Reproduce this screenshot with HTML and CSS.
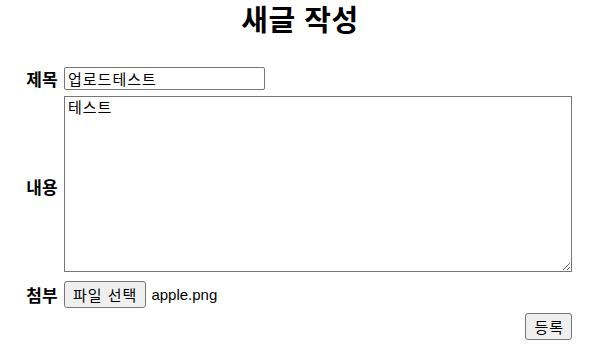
FILE: index.html
```html
<!DOCTYPE html>
<html>
<head>
    <meta charset="utf-8">
    <title>새글 작성</title>
    <link rel="stylesheet" href="styles.css">
</head>
<body>
    <h1 class="title">새글 작성</h1>
    <form class="write-form" id="writeForm">
        <label class="label" for="subject">제목</label>
        <div class="field">
            <input class="input" type="text" id="subject" value="업로드테스트">
        </div>

        <label class="label" for="content">내용</label>
        <div class="field field-content">
            <textarea class="textarea" id="content">테스트</textarea>
        </div>

        <span class="label">첨부</span>
        <div class="field file-field">
            <button class="btn" type="button">파일 선택</button>
            <span class="file-name">apple.png</span>
        </div>

        <div class="actions">
            <button class="btn btn-submit" type="submit">등록</button>
        </div>
    </form>
</body>
</html>
```

FILE: styles.css
```css
body {
    margin: 0;
    font-family: "Liberation Sans", "Noto Sans CJK KR", sans-serif;
    color: #000;
    background: #fff;
}
.title {
    margin: 1px 0 0;
    font-size: 29px;
    line-height: 40px;
    font-weight: bold;
    letter-spacing: 0.5px;
    text-align: center;
}
.write-form {
    display: grid;
    grid-template-columns: 40px 508px;
    column-gap: 2px;
    row-gap: 5px;
    margin: 25px 0 0 22px;
}
.label {
    align-self: center;
    text-align: center;
    font-size: 17px;
    font-weight: bold;
}
.field {
    display: flex;
    align-items: center;
}
.field-content {
    margin-bottom: 4px;
}
.input {
    box-sizing: border-box;
    width: 201px;
    height: 23px;
    padding: 1px 3px;
    border: 1px solid #767676;
    border-radius: 2px;
    font-family: inherit;
    font-size: 15px;
    letter-spacing: 1px;
}
.textarea {
    display: block;
    box-sizing: border-box;
    width: 508px;
    height: 176px;
    padding: 2px 3px;
    border: 1px solid #767676;
    font-family: inherit;
    font-size: 15px;
    line-height: 18px;
    letter-spacing: 1px;
}
.btn {
    box-sizing: border-box;
    height: 27px;
    padding: 0 8px;
    border: 1px solid #767676;
    border-radius: 3px;
    background-color: #efefef;
    color: #000;
    font-family: inherit;
    font-size: 15px;
    letter-spacing: 1px;
}
.btn-submit {
    padding: 0 7px 0 8px;
}
.file-name {
    margin-left: 5px;
    font-size: 15px;
}
.actions {
    grid-column: 2;
    display: flex;
    justify-content: flex-end;
}
```
